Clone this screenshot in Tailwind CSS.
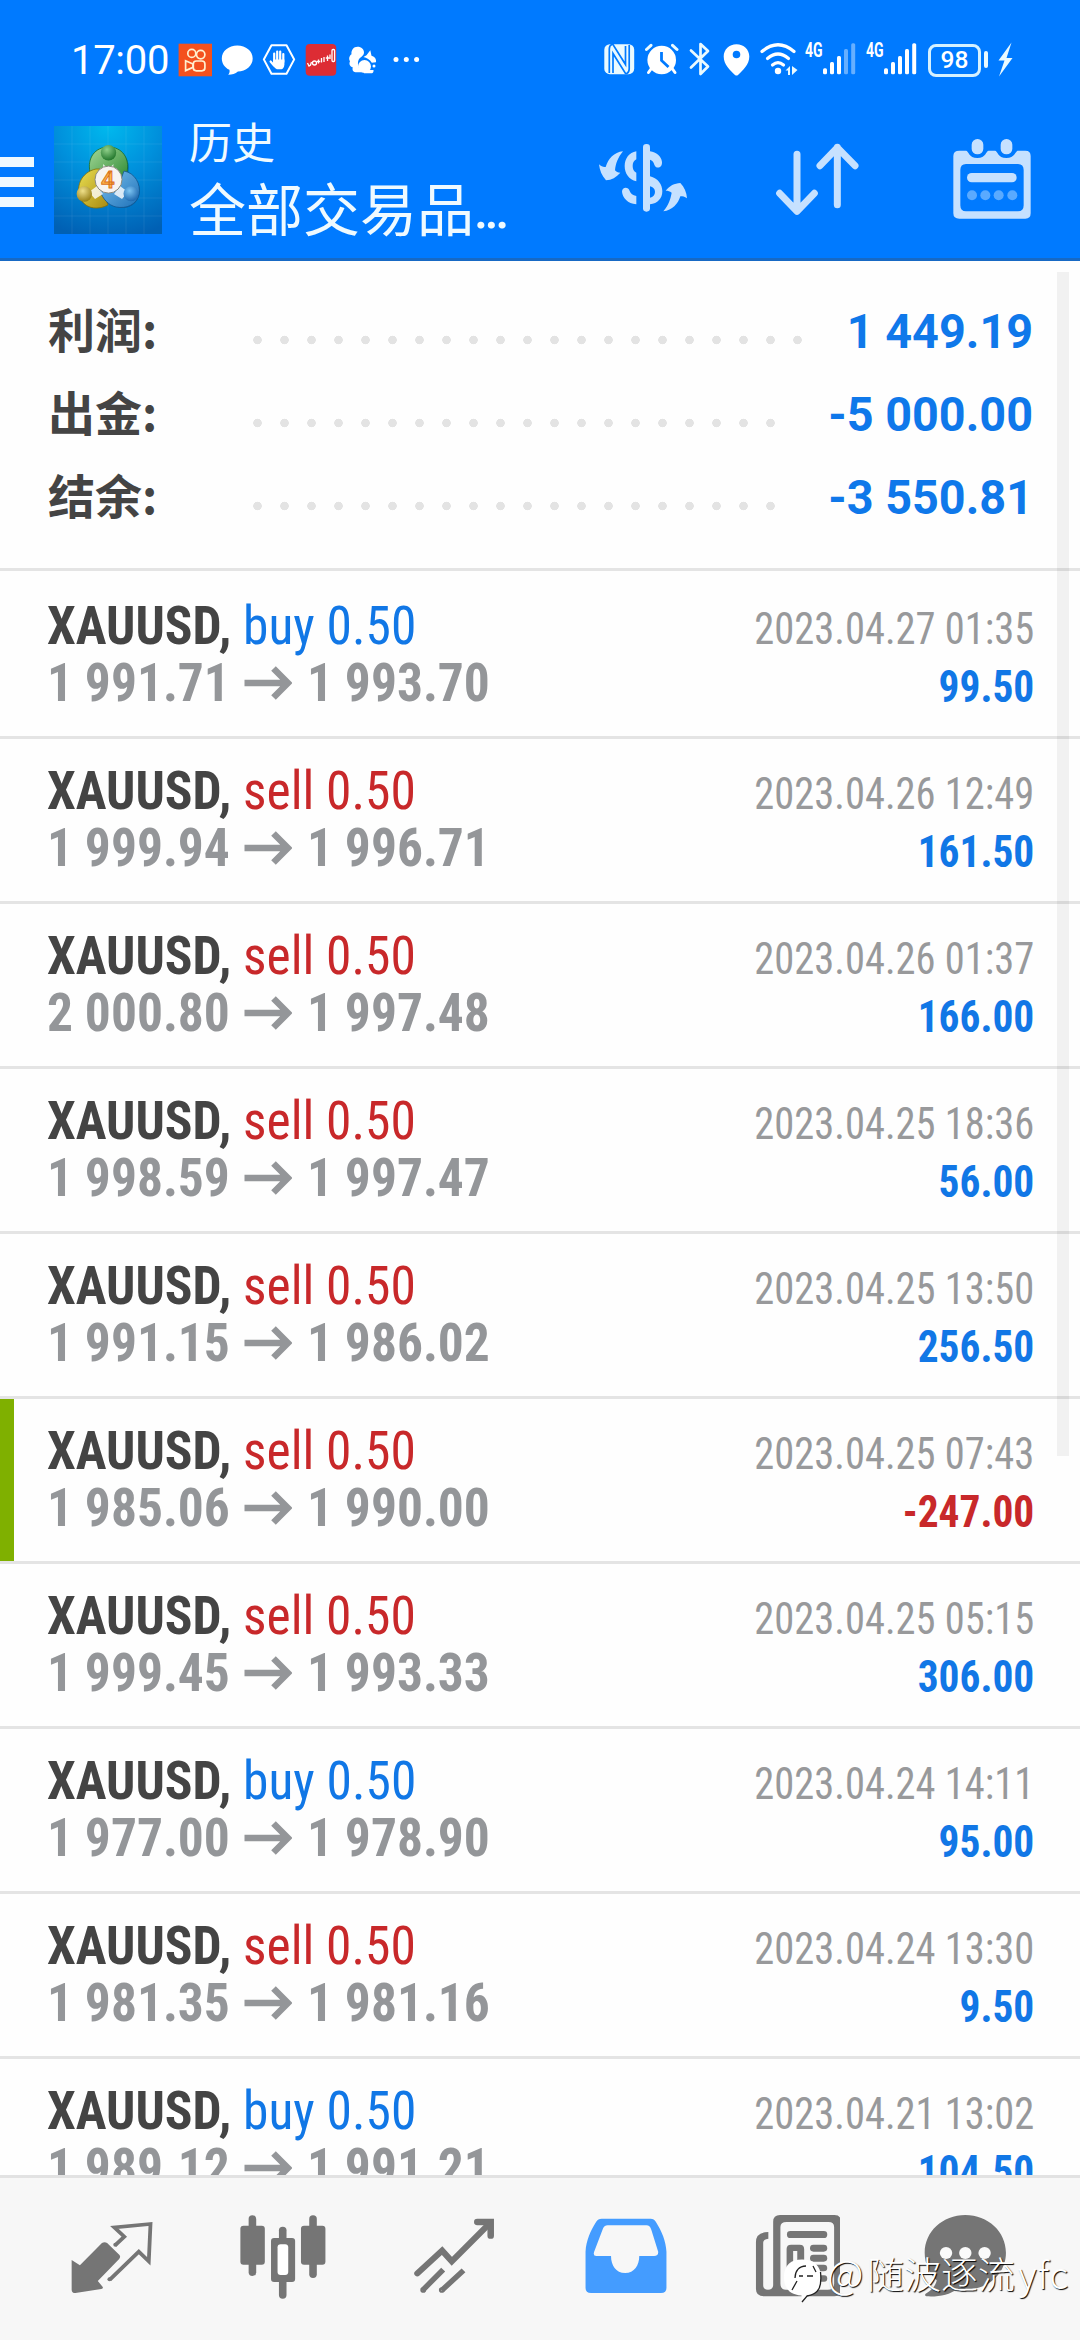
<!DOCTYPE html>
<html lang="zh-CN">
<head>
<meta charset="utf-8">
<title>历史</title>
<script src="https://cdn.jsdelivr.net/npm/@tailwindcss/browser@4"></script>
</head>
<body class="bg-white">
<div class="relative flex h-[2340px] w-[1080px] flex-col overflow-hidden bg-[#fefefe] font-['Roboto','Noto_Sans_CJK_SC',sans-serif]">

  <!-- Status bar -->
  <div class="flex h-[110px] w-full shrink-0 items-start bg-[#007aff] pt-[40px] text-white">
    <div class="ml-[71px] w-[107px] whitespace-nowrap text-[40px] leading-[42px] tracking-[-0.3px]">17:00</div>
    <svg class="h-[40px] w-[34px]" viewBox="178 40 34 40"><rect x="178.6" y="43.7" width="33.4" height="32.6" fill="#f4511e"/><g fill="none" stroke="#fff0d0" stroke-width="1.7"><circle cx="191.8" cy="53.4" r="4"/><circle cx="200.7" cy="54.6" r="4.2"/><rect x="193.3" y="61" width="11.6" height="9.8" rx="3"/><path d="M193 64l-7.4-3.2v9.8l7.4-3.200z"/></g></svg>
    <svg class="ml-[9px] h-[40px] w-[34px]" viewBox="221 40 34 40" fill="#fff"><path d="M237.300 45.500c8.600 0 15.400 5.500 15.400 12.900s-6.800 12.800-14.800 13c-2.600 2.200-5.600 3.300-9.700 3.300 1.400-1.300 1.700-3.300 1.200-4.900-4.700-2.400-7.600-6.500-7.600-11.400 0-7.400 6.900-12.900 15.500-12.900z"/></svg>
    <svg class="ml-[7px] h-[40px] w-[34px]" viewBox="262 40 34 40"><path d="M271.500 45.200h15l7.700 14.200-7.700 14.300h-15l-7.700-14.300z" fill="none" stroke="#fff" stroke-width="2" stroke-linejoin="round"/><path d="M274.200 63V53.500M277.200 60V51.500M280.200 60V51.500M283.300 62V54M274 65.500l-3.400-4" stroke="#fff" stroke-width="2.200" stroke-linecap="round"/><path d="M273.200 59.500h11.200v5c0 3-2 4.800-3 4.800h-4.500c-1.500-.5-3.700-2.800-3.700-4.800z" fill="#fff"/></svg>
    <svg class="ml-[9px] h-[40px] w-[32px]" viewBox="305 40 32 40"><rect x="305.700" y="44" width="30.500" height="31.800" rx="4" fill="#dd2c34"/><g fill="none" stroke="#fff" stroke-width="1.300"><path d="M307.500 63l1.500 3 1.500-1 1-3"/><circle cx="314.500" cy="63" r="2"/><path d="M318.500 59.500v4M316.800 61.500h3.400M321.500 58v4.500M324 57v5M327.500 55.500v5.500M325.800 58h3.400M330 54.500v4.500"/><rect x="332" y="49.500" width="2.600" height="12" rx="1"/></g></svg>
    <svg class="ml-[11px] h-[40px] w-[32px]" viewBox="348 40 32 40" fill="#fff"><path d="M357.500 46.700c4 0 6.500 2.500 6.500 5.800 0 4-4.600 4.500-5.500 7.800-1.600 4 .5 9 3.400 12h-6.400c-2.500-.2-3.500-2.200-2.800-5-2.800-.7-4-3.300-2.700-6-1.600-2.600-.6-5.600 1.500-7-.5-4 2-7.600 6-7.600z"/><path d="M363.500 57l3-1.700 3.800-5 1.200 5.500c3.600 1 5 3.800 4.500 6.400l-4.200.6c-2-3.500-5-5-8.300-5.800z"/><circle cx="364.500" cy="66.500" r="6.500"/><path d="M364 70h9.500v1c0 1.500-1 2.300-2.500 2.300h-7z"/><circle cx="374" cy="66" r="1.500"/></svg>
    <svg class="ml-[12px] h-[40px] w-[30px]" viewBox="392 40 30 40" fill="#fff"><circle cx="396" cy="59.600" r="2.500"/><circle cx="406.300" cy="59.600" r="2.500"/><circle cx="416.600" cy="59.600" r="2.500"/></svg>

    <svg class="ml-[181px] h-[40px] w-[32px]" viewBox="603 40 32 40"><rect x="604.300" y="44.200" width="29.900" height="30" rx="5.500" fill="#eafaff"/><path d="M609.300 73V49q0-3.500 2.500-4.500h1.200l12.500 20V46M629.200 45v24q0 3.500-2.500 4.500h-1.200L613 53.500V73" fill="none" stroke="#007aff" stroke-width="1.700"/></svg>
    <svg class="ml-[10px] h-[40px] w-[34px]" viewBox="645 40 34 40"><circle cx="661.700" cy="60" r="14.300" fill="#fff"/><path d="M646.500 49.500l4.500-4.200M677 49.500l-4.500-4.200" stroke="#eafaff" stroke-width="3" stroke-linecap="round"/><path d="M651 69l-2.500 3.500M672.500 69l2.500 3.500" stroke="#fff" stroke-width="3" stroke-linecap="round"/><path d="M661.500 52v8.500l7 6.500" fill="none" stroke="#007aff" stroke-width="2.800"/></svg>
    <svg class="ml-[9px] h-[40px] w-[26px]" viewBox="688 40 26 40"><path d="M691 50.500l17 16-7.500 7.500V44l7.500 7-17 16.500" fill="none" stroke="#eafaff" stroke-width="2.700" stroke-linejoin="round" stroke-linecap="round"/></svg>
    <svg class="ml-[8px] h-[40px] w-[30px]" viewBox="722 40 30 40"><path fill-rule="evenodd" d="M736.500 44.200c7.300 0 12.800 5.300 12.800 12.200 0 8-6.500 14-11.300 18.500q-1.500 1.300-3 0c-4.800-4.500-11.300-10.500-11.300-18.500 0-6.900 5.500-12.200 12.800-12.200zm0 6.500a3.800 3.800 0 1 0 0 7.600 3.800 3.800 0 0 0 0-7.600z" fill="#fff"/></svg>
    <svg class="ml-[7px] h-[40px] w-[40px]" viewBox="759 40 40 40"><g fill="none" stroke="#fff" stroke-width="3.200" stroke-linecap="round"><path d="M762 51.500q16-13.500 32 0"/><path d="M767.500 58.500q10.500-9 21 0"/><path d="M772.500 65q5.500-4.600 11 0"/></g><circle cx="778" cy="71" r="3.200" fill="#fff"/><path d="M785.500 70.500l4.500-4.500v9h-2v-4.500zM792 66v9l5.500-5z" fill="#eafaff"/></svg>
    <div class="ml-[6px] w-[18px] origin-left scale-x-[0.72] whitespace-nowrap pt-[1px] text-[19.500px] font-bold leading-[20px]">4G</div>
    <svg class="h-[40px] w-[34px]" viewBox="823 40 34 40" fill="#fff"><rect x="823" y="68.300" width="4" height="6" rx="1.500"/><rect x="830" y="62" width="4" height="12.300" rx="1.500"/><rect x="837" y="56" width="4" height="18.300" rx="1.500"/><g opacity=".4"><rect x="844" y="49" width="4" height="25.300" rx="1.500"/><rect x="851.200" y="43.300" width="4" height="31" rx="1.500"/></g></svg>
    <div class="ml-[9px] w-[18px] origin-left scale-x-[0.72] whitespace-nowrap pt-[1px] text-[19.500px] font-bold leading-[20px]">4G</div>
    <svg class="h-[40px] w-[34px]" viewBox="884 40 34 40" fill="#fff"><rect x="884" y="68.300" width="4" height="6" rx="1.500"/><rect x="891" y="62" width="4" height="12.300" rx="1.500"/><rect x="898" y="56" width="4" height="18.300" rx="1.500"/><rect x="905" y="49" width="4" height="25.300" rx="1.500"/><rect x="912.200" y="43.300" width="4" height="31" rx="1.500"/></svg>
    <div class="ml-[10px] mt-[3.500px] flex h-[33px] w-[53px] items-center justify-center rounded-[8px] border-[3px] border-[#d5f1ff] text-[24.500px] font-medium leading-none">98</div>
    <div class="ml-[3px] mt-[11px] h-[17px] w-[4px] rounded-full bg-[#eafaff]"></div>
    <svg class="ml-[9px] h-[40px] w-[18px]" viewBox="996 40 18 40"><path d="M1010.500 42.500L997.500 60.500h6l-5.500 16 13.500-18.500h-6z" fill="#eafaff"/></svg>
  </div>

  <!-- App header -->
  <div class="flex h-[151px] w-full shrink-0 items-start border-b-[3px] border-[#1769c4] bg-[#007aff]">
    <div class="mt-[47px] flex w-[34px] flex-col gap-[10.500px]">
      <div class="h-[9.600px] bg-[#eff9ff]"></div><div class="h-[9.600px] bg-[#eff9ff]"></div><div class="h-[9.600px] bg-[#eff9ff]"></div>
    </div>
    <svg class="ml-[20px] mt-[16px] h-[108px] w-[108px]" viewBox="54 126 108 108">
      <defs>
        <radialGradient id="sky" cx=".5" cy="0" r="1.050"><stop offset="0" stop-color="#00b9ee"/><stop offset=".45" stop-color="#0090dc"/><stop offset="1" stop-color="#0060b4"/></radialGradient>
        <linearGradient id="gr" x1="0" y1="0" x2="1" y2="1"><stop offset="0" stop-color="#a5d99a"/><stop offset="1" stop-color="#27852c"/></linearGradient>
        <linearGradient id="ye" x1="0" y1="0" x2="1" y2="1"><stop offset="0" stop-color="#e9df52"/><stop offset="1" stop-color="#a98a10"/></linearGradient>
        <linearGradient id="bl" x1="0" y1="0" x2="1" y2="1"><stop offset="0" stop-color="#7cc2ee"/><stop offset="1" stop-color="#1d70b8"/></linearGradient>
        <radialGradient id="gh" cx=".4" cy=".3" r=".8"><stop offset="0" stop-color="#8fd08a"/><stop offset="1" stop-color="#146b20"/></radialGradient>
        <radialGradient id="yh" cx=".4" cy=".3" r=".8"><stop offset="0" stop-color="#efe08a"/><stop offset="1" stop-color="#8d7408"/></radialGradient>
        <radialGradient id="bh" cx=".4" cy=".3" r=".8"><stop offset="0" stop-color="#7cc4f2"/><stop offset="1" stop-color="#125ca6"/></radialGradient>
      </defs>
      <rect x="54" y="126" width="108" height="108" fill="url(#sky)"/>
      <path d="M72 126v108M90 126v108M108 126v108M126 126v108M144 126v108M54 144h108M54 162h108M54 180h108M54 198h108M54 216h108" stroke="#fff" stroke-opacity=".07" fill="none"/>
      <g transform="translate(1 2)" fill="#003a70" opacity=".35"><circle cx="108" cy="166" r="20"/><circle cx="94" cy="189" r="17"/><circle cx="122" cy="189" r="17"/></g>
      <g stroke-opacity=".8" stroke-width="1">
        <path d="M90 172c-3-14 5-25 18.500-25S130 158 127 172c-1.500 6-5 10-9 12l-9-14z" fill="url(#gr)" stroke="#1c6e24"/>
        <path d="M108 205c-9 5-21 4-26-4-8-13-1-29 14-32h10l-4 20z" fill="url(#ye)" stroke="#867006"/>
        <path d="M124 171c11 2 17 13 15 23-2 11-13 15-23 13-8-2-13-8-16-16l18-4z" fill="url(#bl)" stroke="#15568f"/>
      </g>
      <path d="M103 164l5.500 5 5-5-1 9h-9zM89 192l8-6 6 8-8 5zM128 192l-8-6-6 8 8 5z" fill="#fff" opacity=".8"/>
      <circle cx="108.500" cy="152.800" r="7.700" fill="url(#gh)"/>
      <circle cx="84.300" cy="194" r="7.700" fill="url(#yh)"/>
      <circle cx="131" cy="193.800" r="7.500" fill="url(#bh)"/>
      <circle cx="108.500" cy="179.600" r="13.500" fill="#f7f4f1" stroke="#8a8a80" stroke-width="1"/>
      <text x="107.800" y="188" text-anchor="middle" font-family="Roboto" font-size="24" font-weight="500" fill="#ffb74a" stroke="#d9701c" stroke-width=".9">4</text>
    </svg>
    <div class="ml-[27px] mt-[5px] w-[360px] whitespace-nowrap font-['Noto_Sans_CJK_SC',sans-serif] text-[#effaff]">
      <div class="h-[50px] text-[43px] leading-[50px]">历史</div>
      <div class="mt-[5.500px] flex h-[70px] text-[57px] leading-[70px]"><span>全部交易品</span><span class="pt-[5px] font-['Roboto'] text-[51px] font-medium tracking-[-3.600px]">...</span></div>
    </div>
    <svg class="ml-[48px] mt-[32px] h-[74px] w-[92px]" viewBox="108 96 276 222" fill="#c6e1ff">
      <rect x="246" y="102" width="21" height="203" rx="10"/>
      <path d="M226 124c-22 4-35 22-35 44s13 41 35 46v-26c-8-4-11-11-11-20s3-16 11-20z"/>
      <path d="M267 124c19 2 34 15 36 32 1 19-18 22-23 8-2-8-6-13-13-15z"/>
      <path fill-rule="evenodd" d="M267 199c24 6 37 24 37 45s-14 37-37 39zM267 229v34c9-2 15-8 15-17s-6-15-15-17z"/>
      <path d="M183 245c0-14 19-16 23-2 3 8 9 13 20 15v25c-26-3-41-19-43-38z"/>
      <path d="M186 124c-27 3-44 22-52 47-7 1-13-1-20-8 2 18 8 34 21 48 17-1 31-9 43-23-8 0-12-2-16-7 2-20 8-37 24-57z"/>
      <path d="M307 304c27-3 44-22 51-45 7 0 13 1 20 6-1-18-8-34-20-46-18 1-32 8-44 23 8 0 12 1 18 6-4 21-9 37-25 56z"/>
    </svg>
    <svg class="ml-[84px] mt-[32px] h-[76px] w-[90px]" viewBox="638 96 270 228" fill="none" stroke="#c6e1ff" stroke-width="21" stroke-linecap="round" stroke-linejoin="round">
      <path d="M710 133v170M658 250l52 54 52-54M831 284V112M779 167l52-54 53 54"/>
    </svg>
    <svg class="ml-[87px] mt-[27px] h-[84px] w-[84px]" viewBox="1170 81 252 252">
      <path fill-rule="evenodd" fill="#c6e1ff" d="M1198 122h20c8 0 8 22 34 22s26-22 34-22h19c8 0 8 22 34 22s27-22 35-22h22q16 0 16 16v172q0 16-16 16h-198q-18 0-18-16V138q0-16 18-16zM1218 162q-17 0-17 18v106q0 18 17 18h156q17 0 17-18V180q0-18-17-18z"/>
      <rect x="1235" y="87" width="35" height="46" rx="17" fill="#c6e1ff"/><rect x="1322" y="87" width="35" height="46" rx="17" fill="#c6e1ff"/>
      <rect x="1221" y="189" width="149" height="28" rx="14" fill="#c6e1ff"/>
      <g fill="#5aaaff"><circle cx="1236" cy="256" r="15"/><circle cx="1276" cy="256" r="15"/><circle cx="1316" cy="256" r="15"/><circle cx="1357" cy="256" r="15"/></g>
    </svg>
  </div>

  <!-- Summary -->
  <div class="flex h-[310px] shrink-0 flex-col border-b-[3px] border-[#e4e4e4] pl-[48px] pr-[47px] pt-[25px]" id="summary"></div>

  <!-- Deals -->
  <div class="min-h-0 flex-1 overflow-hidden pt-[3px]" id="deals"></div>

  <!-- Navigation -->
  <div class="flex h-[165px] shrink-0 items-start border-t-[3px] border-[#e2e2e2] bg-[#f7f7f7] px-[27px] pt-[34px]">
    <div class="flex w-[170.660px] justify-center"><svg class="h-[90px] w-[90px]" preserveAspectRatio="none" viewBox="195.500 456 261.400 270">
      <path fill="#757575" d="M209 600l24 16 64-67q8-5 15 0l36 36q4 6-1 12l-62 66 15 19q0 5-5 5l-75 12q-11 0-11-10z"/>
      <path fill="none" stroke="#757575" stroke-width="11" stroke-linejoin="miter" d="M335 556l27-26-29-28 105-10-5 112-29-29-84 84"/><circle cx="336" cy="554" r="6" fill="#757575"/><circle cx="319" cy="658" r="6" fill="#757575"/>
    </svg></div>
    <div class="flex w-[170.660px] justify-center"><svg class="h-[90px] w-[90px]" preserveAspectRatio="none" viewBox="691.100 456 261.400 270" fill="#757575">
      <rect x="722" y="466" width="22" height="182" rx="11"/><rect x="698" y="497" width="71" height="117" rx="9"/>
      <rect x="898" y="466" width="22" height="188" rx="11"/><rect x="874" y="497" width="71" height="117" rx="9"/>
      <rect x="810" y="500" width="22" height="46" rx="11"/><rect x="810" y="655" width="22" height="61" rx="11"/><rect x="787" y="534" width="70" height="132" rx="9"/><rect x="806" y="553" width="31" height="92" rx="9" fill="#fff"/>
    </svg></div>
    <div class="flex w-[170.660px] justify-center"><svg class="h-[90px] w-[90px]" preserveAspectRatio="none" viewBox="1186.700 456 261.400 270" fill="none" stroke="#757575">
      <path stroke-width="18" stroke-linecap="round" d="M1211 640l72-68 28 32 110-114"/><path stroke-width="19" stroke-linecap="round" d="M1385 486h39v41"/>
      <path stroke-width="16" d="M1286 629l-60 62M1345 631l-63 60"/><circle cx="1228" cy="690" r="5" stroke-width="7"/><circle cx="1282" cy="690" r="5" stroke-width="7"/>
    </svg></div>
    <div class="flex w-[170.660px] justify-center"><svg class="h-[90px] w-[90px]" preserveAspectRatio="none" viewBox="114 456 261.400 270">
      <path fill="#449cff" fill-rule="evenodd" d="M180 476h142q10 0 15 9c18 30 29 56 31 90v109q0 15-16 15H149q-16 0-16-15V575c2-34 14-62 31-90q5-9 16-9zM197 496q-9 0-13 9l-26 70q-4 13 6 13h43c0 28 14 51 41 51s41-23 41-51h43q13 0 12-13l-20-66q-4-13-14-13z"/>
    </svg></div>
    <div class="flex w-[170.660px] justify-center"><svg class="h-[90px] w-[90px]" preserveAspectRatio="none" viewBox="609.700 456 261.400 270" fill="#757575">
      <path fill-rule="evenodd" d="M697 465h158q19 0 19 20v205q0 19-19 19H650q-23 0-23-22V546q0-30 36-30v20q-15 1-15 12v128q0 13 14 13t15-13V485q0-20 20-20zM716 486q-18 0-18 15v170q0 18 16 18h122q18 0 18-18V501q0-15-16-15z"/>
      <rect x="717" y="513" width="117" height="21" rx="10"/><path fill-rule="evenodd" d="M729 554h25q13 0 13 13v55q0 12-13 12h-25q-13 0-13-12v-55q0-13 13-13zM735 573v42h12v-42z"/>
      <rect x="784" y="554" width="50" height="21" rx="10"/><rect x="784" y="584" width="50" height="21" rx="10"/><rect x="784" y="614" width="50" height="20" rx="10"/><rect x="717" y="646" width="117" height="19" rx="9"/>
    </svg></div>
    <div class="flex w-[170.660px] justify-center"><svg class="h-[90px] w-[90px]" preserveAspectRatio="none" viewBox="1105.300 456 261.400 270">
      <path fill="#757575" d="M1234 465c66 0 118 50 118 113s-52 111-118 111q-12 0-23-3c-23 19-55 25-90 23q-8-4 0-9c14-9 26-20 30-39-22-21-35-50-35-83 0-63 52-113 118-113z"/>
      <g fill="#fafafa"><circle cx="1178" cy="579" r="18"/><circle cx="1234" cy="579" r="18"/><circle cx="1290" cy="579" r="18"/></g>
    </svg></div>
  </div>

  <!-- Scroll indicator -->
  <div class="absolute left-[1057px] top-[272px] h-[1184px] w-[11.500px] bg-black/5"></div>

  <!-- Watermark -->
  <div class="absolute left-[783px] top-[2250px] flex items-start whitespace-nowrap font-['Noto_Sans_CJK_SC',sans-serif] text-[37px] font-light leading-[48px] text-white [text-shadow:1px_1px_1px_#000]">
    <svg class="h-[56px] w-[44px]" viewBox="0 0 44 56"><path d="M19 9.500c12 0 19 6 19 18.500 0 11-4 16-14 17.500l-5 6-.5-6C7 44.500 1 39 1 27 1 15 8 9.500 19 9.500z" fill="#fff"/><path d="M12 28c0-7 4-12 11-12M16 26h4M24 26h6M14 31l-5 9M30 16l3 6M37.500 22c1.500 14-1 22-13.500 24l-5 6" fill="none" stroke="#222" stroke-width="1.300"/></svg>
    <span class="-mt-[2px] w-[40px] text-[40px]">@</span><span class="-mt-[1px] w-[151px]">随波逐流</span><span class="-mt-[1px] text-[38px] tracking-[0.8px]">yfc</span>
  </div>
</div>
<script>
const summary = [['利润:', '1 449.19', 567], ['出金:', '-5 000.00', 540], ['结余:', '-3 550.81', 540]];
document.getElementById('summary').innerHTML = summary.map(([label, value, dots]) => `
  <div class="flex h-[83px] items-start">
    <div class="w-[196px] font-['Noto_Sans_CJK_SC',sans-serif] text-[47px] font-bold leading-[83px] text-[#444]">${label}</div>
    <div class="mt-[49px] h-[10px] bg-[radial-gradient(circle_at_center,#e3e3e3_4px,transparent_4.600px)] bg-[length:27px_10px]" style="width:${dots}px"></div>
    <div class="ml-auto mt-[4px] origin-right scale-x-[0.975] whitespace-nowrap text-[48px] font-bold leading-[83px] text-[#0f78ea]">${value}</div>
  </div>`).join('');

const deals = [
  ['buy', '1 991.71', '1 993.70', '2023.04.27 01:35', '99.50'],
  ['sell', '1 999.94', '1 996.71', '2023.04.26 12:49', '161.50'],
  ['sell', '2 000.80', '1 997.48', '2023.04.26 01:37', '166.00'],
  ['sell', '1 998.59', '1 997.47', '2023.04.25 18:36', '56.00'],
  ['sell', '1 991.15', '1 986.02', '2023.04.25 13:50', '256.50'],
  ['sell', '1 985.06', '1 990.00', '2023.04.25 07:43', '-247.00', true],
  ['sell', '1 999.45', '1 993.33', '2023.04.25 05:15', '306.00'],
  ['buy', '1 977.00', '1 978.90', '2023.04.24 14:11', '95.00'],
  ['sell', '1 981.35', '1 981.16', '2023.04.24 13:30', '9.50'],
  ['buy', '1 989.12', '1 991.21', '2023.04.21 13:02', '104.50'],
];
const BLUE = 'text-[#1177e6]', RED = 'text-[#c8282a]';
document.getElementById('deals').innerHTML = deals.map(([side, open, close, time, profit, marked]) => `
  <div class="flex h-[165px] border-b-[3px] border-[#e4e4e4] font-stretch-condensed">
    <div class="w-[14px] ${marked ? 'bg-[#7fb000]' : ''}"></div>
    <div class="ml-[33px] w-[500px] whitespace-nowrap pt-[23px] text-[54px] leading-[58px]">
      <div class="origin-left scale-x-[0.953] ${side === 'buy' ? BLUE : RED}"><b class="font-bold text-[#444]">XAUUSD,</b> ${side} 0.50</div>
      <div class="-mt-[1px] flex items-center font-bold text-[#949699]">
        <span class="w-[197px] origin-left scale-x-[0.953]">${open}</span>
        <svg class="h-[34px] w-[48px]" viewBox="0 0 48 34" fill="none" stroke="#949699" stroke-width="6.500"><path d="M.5 17h42M29.500 2.500L44 17 29.500 31.500"/></svg>
        <span class="ml-[15px] origin-left scale-x-[0.953]">${close}</span>
      </div>
    </div>
    <div class="ml-auto mr-[46px] whitespace-nowrap pt-[26px] text-right text-[44px] leading-[58px]">
      <div class="origin-right scale-x-[0.92] text-[#98999b]">${time}</div>
      <div class="origin-right scale-x-[0.94] font-bold ${profit[0] === '-' ? RED : BLUE}">${profit}</div>
    </div>
  </div>`).join('');
</script>
</body>
</html>
